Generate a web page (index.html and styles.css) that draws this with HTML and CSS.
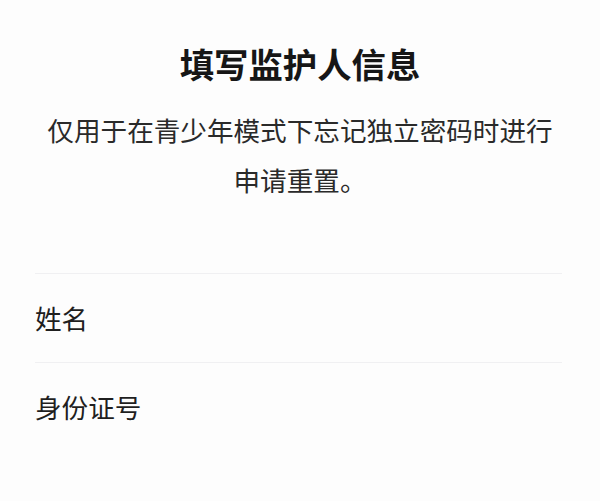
FILE: index.html
```html
<!DOCTYPE html>
<html lang="zh-CN">
<head>
<meta charset="utf-8">
<title>填写监护人信息</title>
<link rel="stylesheet" href="styles.css">
</head>
<body>
<main class="page">
  <header class="intro">
    <h1 class="title">填写监护人信息</h1>
    <p class="desc">仅用于在青少年模式下忘记独立密码时进行申请重置。</p>
  </header>
  <section class="form">
    <div class="row"><span class="label">姓名</span></div>
    <div class="row"><span class="label">身份证号</span></div>
  </section>
</main>
</body>
</html>
```
FILE: styles.css
```css
html, body {
  margin: 0;
  padding: 0;
  background: #fdfdfd;
}
body {
  font-family: "Noto Sans CJK SC", "Noto Sans", sans-serif;
  color: #1d1d1d;
}
.page {
  padding-top: 43px;
}
.intro {
  text-align: center;
  padding: 0 30px;
}
.title {
  margin: 0;
  font-size: 34.4px;
  line-height: 40px;
  font-weight: 700;
  color: #161616;
}
.desc {
  max-width: 520px;
  margin: 22px auto 0;
  font-size: 26.6px;
  line-height: 50px;
  color: #2a2a2a;
}
.form {
  margin: 68px 38px 0 35px;
}
.row {
  border-top: 1px solid #f0f0f2;
  height: 88px;
  display: flex;
  align-items: center;
}
.label {
  font-size: 26.6px;
  line-height: 36px;
  color: #1f1f1f;
}
```
